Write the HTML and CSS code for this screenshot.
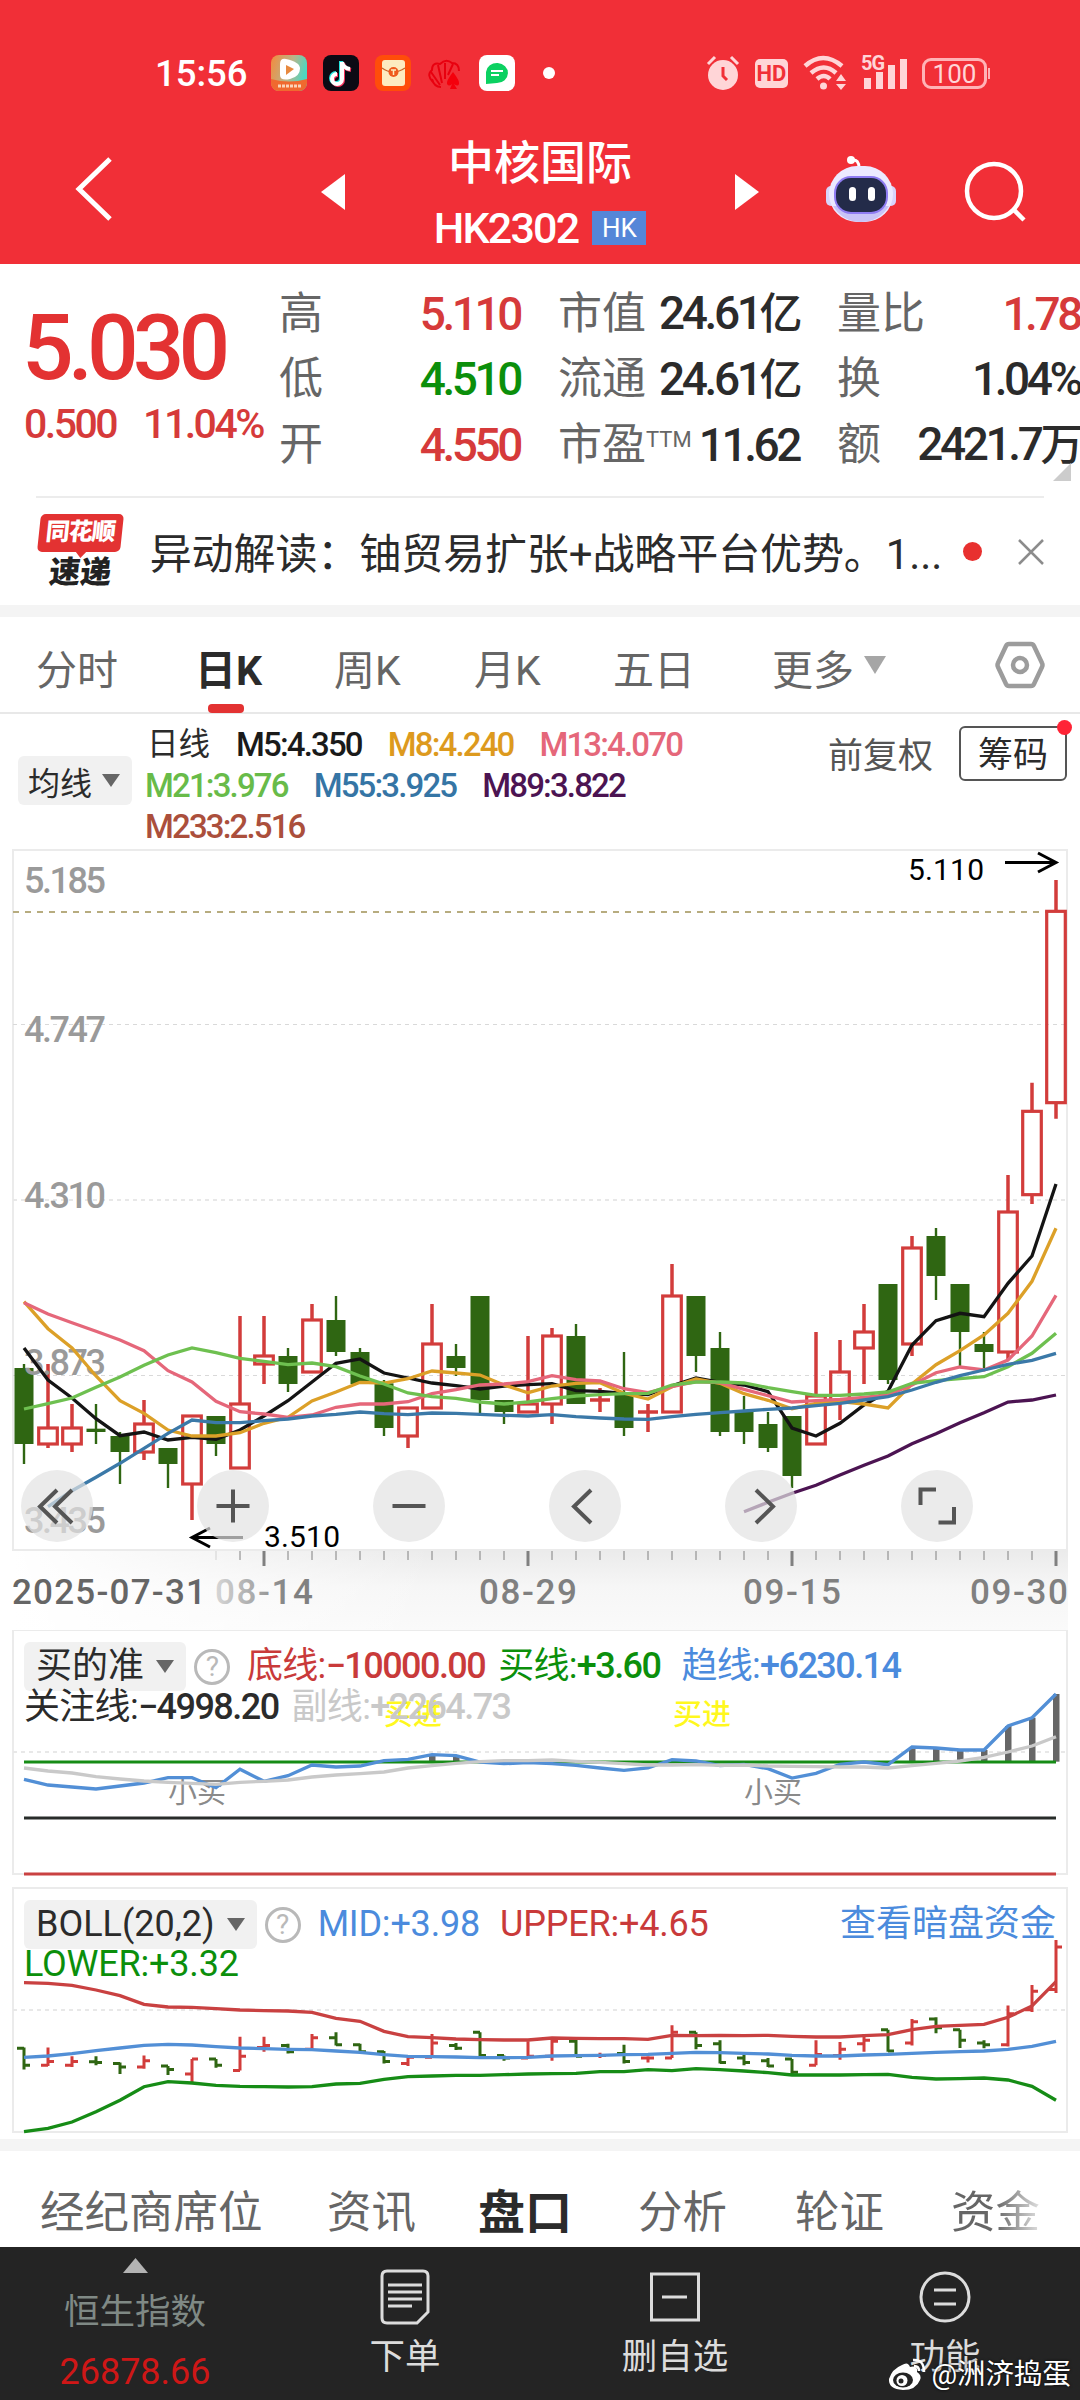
FILE: index.html
```html
<!DOCTYPE html>
<html lang="zh-CN">
<head>
    <meta charset="UTF-8">
    <meta name="viewport" content="width=device-width, initial-scale=1.0">
    <title>中核国际 HK2302</title>
    <link rel="stylesheet" href="styles.css">
</head>
<body>
    <header class="header">
        <div class="status-bar">
            <span class="clock">15:56</span>
            <div class="app-icons">
                <svg width="36" height="36" viewBox="0 0 36 36">
                    <defs>
                        <linearGradient id="video" x1="0" y1="0" x2="1" y2="0.3">
                            <stop offset="0" stop-color="#f58a3c"/>
                            <stop offset="0.6" stop-color="#b9b58a"/>
                            <stop offset="1" stop-color="#4fd6c0"/>
                        </linearGradient>
                    </defs>
                    <rect width="36" height="36" rx="8" fill="url(#video)"/>
                    <path d="M0 24q18 5 36 0v4a8 8 0 0 1-8 8H8a8 8 0 0 1-8-8z" fill="#f0692f"/>
                    <path d="M9 9q0-6 6-5 14 3 14 9.500 0 8-10 10.500-10 2-10-4z" fill="#fff"/>
                    <path d="M15 10l8 4-8 6z" fill="#e8893f"/>
                    <path d="M7 31h23" stroke="#fbd3b8" stroke-width="3" stroke-dasharray="3 1"/>
                </svg>
                <svg width="36" height="36" viewBox="0 0 36 36">
                    <rect width="36" height="36" rx="8" fill="#0b0a14"/>
                    <g fill="none" stroke-width="4">
                        <path d="M18 6v17a5 5 0 1 1-5-5M18 7q1 6 8 7" stroke="#25e5e0"/>
                        <path d="M20 8v17a5 5 0 1 1-5-5M20 8q1 6 8 7" stroke="#f5325c"/>
                        <path d="M19 7v17a5 5 0 1 1-5-5M19 7q1 6 8 7" stroke="#fff"/>
                    </g>
                </svg>
                <svg width="36" height="36" viewBox="0 0 36 36">
                    <rect width="36" height="36" rx="8" fill="#ff4d0a"/>
                    <rect x="7" y="5" width="23" height="26" rx="3" fill="#fdebc0"/>
                    <path d="M7 13q11 8 23 0" stroke="#c9662a" stroke-width="1.5" fill="none"/>
                    <circle cx="18.500" cy="17" r="5" fill="#ef5a1d"/>
                    <path d="M16 15h5M18.500 15v5" stroke="#fdebc0" stroke-width="1.500"/>
                </svg>
                <svg width="36" height="36" viewBox="0 0 36 36">
                    <g fill="none" stroke="#e8000f" stroke-width="2">
                        <path d="M6 27Q-1 20 5 15Q5 7 13 9Q19 3 25 8Q32 8 32 16"/>
                        <path d="M13 30L4 17M15 28L11 10M18 24L18 8M21 20L26 9M5 24q2 8 9 8"/>
                    </g>
                    <path d="M26 17q-7 9-6 12 2 3 5 0l-2 5h7l-3-5q4 3 5 0 1-3-6-12z" fill="#f4000c"/>
                </svg>
                <svg width="36" height="36" viewBox="0 0 36 36">
                    <rect width="36" height="36" rx="8" fill="#fff"/>
                    <path d="M7 29V17A11 10 0 1 1 18 28z" fill="#0bd161"/>
                    <path d="M12 16h12M12 20h8" stroke="#fff" stroke-width="2"/>
                </svg>
            </div>
            <span class="more-dot"></span>
            <div class="system-icons">
                <svg width="34" height="36" viewBox="0 0 34 36">
                    <circle cx="17" cy="20" r="15" fill="#ffd5d7"/>
                    <path d="M2 9l7-7M32 9l-7-7" stroke="#ffd5d7" stroke-width="3"/>
                    <path d="M17 12v9l4 4" stroke="#f12f37" stroke-width="3" fill="none"/>
                </svg>
                <span class="hd">HD</span>
                <svg width="46" height="36" viewBox="0 0 46 36" fill="none" stroke="#ffd5d7" stroke-width="4.500">
                    <path d="M2 11Q20-5 39 11M8 18q13-11 25 0M14 24q7-6 13 0"/>
                    <circle cx="20.500" cy="31" r="3.500" fill="#ffd5d7" stroke="none"/>
                    <path d="M38 19l5 7H33zM38 35l5-6H33z" fill="#ffd5d7" stroke="none"/>
                </svg>
                <div class="signal">
                    <span class="network">5G</span>
                    <svg width="48" height="34" viewBox="0 0 48 34" fill="#ffd5d7">
                        <path d="M3 22h7v11H3zM15 16h7v17h-7zM27 9h7v24h-7zM39 3h7v30h-7z"/>
                    </svg>
                </div>
                <span class="battery">100</span>
                <span class="battery-tip"></span>
            </div>
        </div>
        <div class="title-bar">
            <svg class="back" width="40" height="66" viewBox="0 0 40 66"><path d="M36 3L5 33l31 30" fill="none" stroke="#fff" stroke-width="5"/></svg>
            <svg class="prev" width="24" height="36" viewBox="0 0 24 36"><path d="M24 0v36L0 18z" fill="#fff"/></svg>
            <div class="stock">
                <h1>中核国际</h1>
                <div class="code">HK2302<span class="market">HK</span></div>
            </div>
            <svg class="next" width="24" height="36" viewBox="0 0 24 36"><path d="M0 0v36l24-18z" fill="#fff"/></svg>
            <svg class="robot" width="72" height="68" viewBox="0 0 72 68">
                <path d="M34 12q0-9-7-8" fill="none" stroke="#fff" stroke-width="3"/>
                <circle cx="26" cy="4" r="4" fill="#fff"/>
                <rect x="1" y="30" width="10" height="20" rx="5" fill="#d8d4fb"/>
                <rect x="61" y="30" width="10" height="20" rx="5" fill="#d8d4fb"/>
                <rect x="4" y="10" width="64" height="56" rx="28" fill="#ece9ff"/>
                <path d="M8 50q10 16 28 16t28-16z" fill="#c9c3f6"/>
                <rect x="9" y="20" width="54" height="38" rx="17" fill="#8f7cf2"/>
                <rect x="11" y="22" width="50" height="34" rx="15" fill="#232b49"/>
                <rect x="24" y="31" width="7" height="14" rx="3.500" fill="#fff"/>
                <rect x="43" y="31" width="7" height="14" rx="3.500" fill="#fff"/>
            </svg>
            <svg class="search" width="64" height="62" viewBox="0 0 64 62" fill="none" stroke="#fff" stroke-width="4.500">
                <circle cx="30" cy="30" r="27"/>
                <path d="M50 49l10 10"/>
            </svg>
        </div>
    </header>

    <section class="quote">
        <div class="price">
            <div class="last">5.030</div>
            <div class="change"><span>0.500</span><span>11.04%</span></div>
        </div>
        <dl class="stats">
            <div><dt>高</dt><dd class="up">5.110</dd></div>
            <div><dt>低</dt><dd class="down">4.510</dd></div>
            <div><dt>开</dt><dd class="up">4.550</dd></div>
        </dl>
        <dl class="stats">
            <div><dt>市值</dt><dd>24.61<i>亿</i></dd></div>
            <div><dt>流通</dt><dd>24.61<i>亿</i></dd></div>
            <div><dt>市盈<sup>TTM</sup></dt><dd>11.62</dd></div>
        </dl>
        <dl class="stats">
            <div><dt>量比</dt><dd class="up">1.78</dd></div>
            <div><dt>换</dt><dd>1.04%</dd></div>
            <div><dt>额</dt><dd>2421.7<i>万</i></dd></div>
        </dl>
        <span class="corner"></span>
    </section>

    <section class="news">
        <div class="brand"><span class="brand-top">同花顺</span><span class="brand-bottom">速递</span></div>
        <p>异动解读：铀贸易扩张+战略平台优势。1...</p>
        <span class="unread"></span>
        <svg width="26" height="26" viewBox="0 0 26 26"><path d="M1 1l24 24M25 1L1 25" stroke="#8c8c8c" stroke-width="2.500"/></svg>
    </section>

    <nav class="periods">
        <span>分时</span>
        <span class="active">日K</span>
        <span>周K</span>
        <span>月K</span>
        <span>五日</span>
        <span>更多<svg width="22" height="18" viewBox="0 0 22 18"><path d="M0 0h22L11 18z" fill="#a6a6a6"/></svg></span>
        <svg class="settings" width="50" height="48" viewBox="0 0 50 48" fill="none" stroke="#9c9c9c" stroke-width="4.500">
            <path d="M14 3h22q2 0 3 2l8 17q1 2 0 4l-8 17q-1 2-3 2H14q-2 0-3-2L3 26q-1-2 0-4l8-17q1-2 3-2z"/>
            <circle cx="25" cy="24" r="7"/>
        </svg>
    </nav>

    <section class="averages">
        <button class="picker">均线<svg width="18" height="13" viewBox="0 0 18 13"><path d="M0 0h18L9 13z" fill="#666"/></svg></button>
        <div class="ma-list">
            <div><span class="ma-name">日线</span><span class="m5">M5:4.350</span><span class="m8">M8:4.240</span><span class="m13">M13:4.070</span></div>
            <div><span class="m21">M21:3.976</span><span class="m55">M55:3.925</span><span class="m89">M89:3.822</span></div>
            <div><span class="m233">M233:2.516</span></div>
        </div>
        <div class="adjust">前复权</div>
        <div class="chips">筹码</div>
    </section>

    <svg class="kline" id="kline" width="1080" height="784" viewBox="0 846 1080 784">
        <defs>
            <linearGradient id="axisShade" x1="0" y1="0" x2="0" y2="1">
                <stop offset="0" stop-color="#ebebeb"/>
                <stop offset="0.450" stop-color="#f6f6f6"/>
                <stop offset="1" stop-color="#fafafa"/>
            </linearGradient>
            <linearGradient id="axisFade">
                <stop offset="0" stop-color="#fff"/>
                <stop offset="0.400" stop-color="#fff" stop-opacity="0"/>
            </linearGradient>
            <linearGradient id="dateFade" gradientUnits="userSpaceOnUse" x1="205" y1="0" x2="290" y2="0">
                <stop offset="0" stop-color="#808080" stop-opacity="0.200"/>
                <stop offset="1" stop-color="#808080"/>
            </linearGradient>
        </defs>
        <rect x="13" y="1551" width="1055" height="79" fill="url(#axisShade)"/>
        <rect x="13" y="1551" width="1055" height="79" fill="url(#axisFade)"/>
        <rect x="13" y="850" width="1054" height="700" fill="#fff" stroke="#ebebeb" stroke-width="2"/>
        <g class="grid-lines">
            <path d="M13 1024.500H1066M13 1375.500H1066" stroke="#d9d9d9" stroke-width="1" stroke-dasharray="4 4"/>
            <path d="M13 1200H1066" stroke="#e8e8e8" stroke-width="2" stroke-dasharray="4 4"/>
            <path d="M13 912H1046" stroke="#b7ac7f" stroke-width="2" stroke-dasharray="6 6"/>
        </g>
        <g id="candles"></g>
        <g class="price-labels">
            <text x="24" y="892.500" textLength="82">5.185</text>
            <text x="24" y="1042" textLength="82">4.747</text>
            <text x="24" y="1208" textLength="82">4.310</text>
            <text x="24" y="1375" textLength="82">3.873</text>
            <text x="24" y="1533" textLength="82">3.435</text>
        </g>
        <g id="averages"></g>
        <g class="marks">
            <text x="908" y="880" textLength="76">5.110</text>
            <text x="264" y="1547" textLength="76">3.510</text>
            <path d="M1005 862.500h50M1038 853l18 9.500-18 9.500M243 1537.500h-50M210 1528l-18 9.500 18 9.500"/>
        </g>
        <g class="controls">
            <circle cx="57" cy="1506" r="36"/>
            <circle cx="233" cy="1506" r="36"/>
            <circle cx="409" cy="1506" r="36"/>
            <circle cx="585" cy="1506" r="36"/>
            <circle cx="761" cy="1506" r="36"/>
            <circle cx="937" cy="1506" r="36"/>
            <path d="M57 1490l-17 16.500 17 16.500M72 1490l-17 16.500 17 16.500"/>
            <path d="M216.500 1506h33M233 1489.500v33"/>
            <path d="M392.500 1506h33"/>
            <path d="M591 1490l-17 16.500 17 16.500"/>
            <path d="M756 1490l17 16.500-17 16.500"/>
            <path d="M920.500 1505v-15.500H936M938.500 1522.500H954V1507"/>
        </g>
        <g id="ticks"></g>
        <g class="dates">
            <text x="12" y="1604" textLength="194" fill="#666">2025-07-31</text>
            <text x="215" y="1604" textLength="98" fill="url(#dateFade)">08-14</text>
            <text x="479" y="1604" textLength="98">08-29</text>
            <text x="743" y="1604" textLength="98">09-15</text>
            <text x="970" y="1604" textLength="98">09-30</text>
        </g>
    </svg>

    <section class="panel panel-buy">
        <svg class="panel-chart" width="1080" height="252" viewBox="0 1630 1080 252">
            <rect x="13" y="1630" width="1054" height="244" fill="#fff" stroke="#ebebeb" stroke-width="2"/>
            <path d="M13 1752H1066" stroke="#e8e8e8" stroke-width="2" stroke-dasharray="4 4"/>
            <text class="signal-small" x="168" y="1803">小买</text>
            <text class="signal-small" x="744" y="1803">小买</text>
            <g id="trend"></g>
            <path d="M24 1818H1056" stroke="#282c2a" stroke-width="3"/>
            <path d="M24 1874H1056" stroke="#c94141" stroke-width="3"/>
            <text class="signal-buy" x="384" y="1725">买进</text>
            <text class="signal-buy" x="673" y="1725">买进</text>
        </svg>
        <div class="panel-legend">
            <button class="picker">买的准<svg width="18" height="13" viewBox="0 0 18 13"><path d="M0 0h18L9 13z" fill="#666"/></svg></button>
            <span class="help">?</span>
            <span class="v-red">底线:<b>−10000.00</b></span>
            <span class="v-green">买线:<b>+3.60</b></span>
            <span class="v-blue trend-value">趋线:<b>+6230.14</b></span>
        </div>
        <div class="panel-legend second">
            <span>关注线:<b>−4998.20</b></span>
            <span class="v-gray">副线:<b>+2264.73</b></span>
        </div>
    </section>

    <section class="panel panel-boll">
        <svg class="panel-chart" width="1080" height="257" viewBox="0 1882 1080 257">
            <rect x="13" y="1888" width="1054" height="244" fill="#fff" stroke="#ebebeb" stroke-width="2"/>
            <path d="M13 2010H1066" stroke="#e8e8e8" stroke-width="2" stroke-dasharray="4 4"/>
            <g id="boll"></g>
        </svg>
        <div class="panel-legend">
            <button class="picker">BOLL(20,2)<svg width="18" height="13" viewBox="0 0 18 13"><path d="M0 0h18L9 13z" fill="#666"/></svg></button>
            <span class="help">?</span>
            <span class="v-blue">MID:+3.98</span>
            <span class="v-red">UPPER:+4.65</span>
            <a class="dark-pool">查看暗盘资金</a>
        </div>
        <div class="panel-legend second">
            <span class="v-green">LOWER:+3.32</span>
        </div>
    </section>

    <nav class="info-tabs">
        <span>经纪商席位</span>
        <span>资讯</span>
        <span class="active">盘口</span>
        <span>分析</span>
        <span>轮证</span>
        <span class="fading">资金</span>
    </nav>

    <footer class="toolbar">
        <div class="index">
            <svg width="25" height="15" viewBox="0 0 25 15"><path d="M12.500 0L25 15H0z" fill="#b3b3b3"/></svg>
            <span class="index-name">恒生指数</span>
            <span class="index-value">26878.66</span>
        </div>
        <div class="tool">
            <svg width="50" height="56" viewBox="0 0 50 56" fill="none" stroke="#dcdcdc" stroke-width="3">
                <path d="M7 2h36q5 0 5 5v36L37 54H7q-5 0-5-5V7q0-5 5-5z"/>
                <path d="M8 16h34M8 23h34M8 30h34M8 37h24"/>
            </svg>
            <span>下单</span>
        </div>
        <div class="tool">
            <svg width="50" height="56" viewBox="0 0 50 56" fill="none" stroke="#dcdcdc" stroke-width="3">
                <path d="M1.500 5h47v46h-47zM12 28h25"/>
            </svg>
            <span>删自选</span>
        </div>
        <div class="tool">
            <svg width="52" height="56" viewBox="0 0 52 56" fill="none" stroke="#dcdcdc" stroke-width="3">
                <circle cx="26" cy="28" r="24"/>
                <path d="M15 21h22M15 35h22"/>
            </svg>
            <span>功能</span>
        </div>
        <div class="watermark">
            <svg width="40" height="34" viewBox="0 0 40 34">
                <path d="M15 7Q21 3 23 9Q31 7 30 14Q35 17 33 22Q29 32 16 32Q1 31 2 21Q5 11 15 7z" fill="#fff"/>
                <ellipse cx="16" cy="22" rx="10" ry="7.500" fill="#242424"/>
                <circle cx="15" cy="22.500" r="5.500" fill="#fff"/>
                <circle cx="14" cy="23" r="2.500" fill="#242424"/>
                <path d="M26 2q11-1 11 12M27 8q5 0 5 5" fill="none" stroke="#fff" stroke-width="2.500"/>
            </svg>
            @洲济捣蛋
        </div>
    </footer>

    <script src="chart.js"></script>
</body>
</html>
```
FILE: styles.css
```css
* {
    box-sizing: border-box;
}
body {
    margin: 0;
    width: 1080px;
    height: 2400px;
    overflow: hidden;
    background: #fff;
    color: #2b2b2b;
    font-family: Roboto, "Noto Sans CJK SC", sans-serif;
}
svg {
    display: block;
    flex: none;
}
h1, p, dl, dd {
    margin: 0;
}
i {
    font-style: normal;
}

/* header */
.header {
    height: 264px;
    background: #f12f37;
    color: #fff;
}
.status-bar {
    display: flex;
    align-items: center;
    height: 146px;
    padding-left: 155px;
}
.clock {
    width: 116px;
    font-size: 36.5px;
    font-weight: 500;
}
.app-icons {
    display: flex;
    gap: 16px;
}
.more-dot {
    width: 12px;
    height: 12px;
    margin-left: 28px;
    border-radius: 50%;
    background: #fff;
}
.system-icons {
    display: flex;
    align-items: center;
    margin-left: 151px;
    color: #ffd5d7;
}
.hd {
    width: 33px;
    height: 29px;
    margin: 0 15px 0 15px;
    border-radius: 5px;
    background: #ffd5d7;
    color: #f12f37;
    font-size: 22px;
    font-weight: 700;
    line-height: 29px;
    text-align: center;
}
.signal {
    display: grid;
    width: 48px;
    margin: 0 13px 0 12px;
}
.signal > * {
    grid-area: 1 / 1;
}
.network {
    font-size: 20px;
    font-weight: 700;
    line-height: 14px;
    letter-spacing: -1px;
}
.battery {
    width: 65px;
    height: 31px;
    border: 3px solid #ffb3b6;
    border-radius: 9px;
    font-size: 26px;
    line-height: 26px;
    text-align: center;
}
.battery-tip {
    width: 2px;
    height: 11px;
    margin-left: 1px;
    background: #ffb3b6;
}
.title-bar {
    display: flex;
    height: 118px;
}
.back {
    margin: 10px 0 0 74px;
}
.prev {
    margin: 28px 0 0 207px;
}
.stock {
    width: 390px;
    margin-top: -11px;
    text-align: center;
}
.stock h1 {
    font-size: 46px;
    font-weight: 500;
    line-height: 56px;
}
.code {
    display: flex;
    align-items: center;
    justify-content: center;
    height: 74px;
    font-size: 43px;
    font-weight: 500;
    letter-spacing: -1.8px;
}
.market {
    width: 54px;
    height: 34px;
    margin-left: 14px;
    background: #5586d8;
    font-size: 26px;
    font-weight: 400;
    line-height: 34px;
    letter-spacing: 0;
}
.next {
    margin-top: 28px;
}
.robot {
    margin: 10px 0 0 66px;
}
.search {
    margin: 15px 0 0 67px;
}

/* quote */
.quote {
    display: flex;
    position: relative;
    height: 232px;
    padding-top: 17px;
}
.price {
    width: 279px;
    padding-left: 24px;
    color: #e33232;
}
.last {
    margin-top: 11px;
    margin-left: -2px;
    font-size: 91px;
    font-weight: 500;
    line-height: 112px;
    letter-spacing: -6px;
}
.change {
    display: flex;
    gap: 27px;
    margin-top: 1px;
    color: #d63a3a;
    font-size: 41px;
    font-weight: 500;
    line-height: 38px;
    letter-spacing: -2.5px;
}
.stats {
    width: 241px;
    margin-right: 38px;
}
.stats:last-of-type {
    width: 243px;
    margin-right: 0;
}
.stats > div {
    display: flex;
    align-items: center;
    justify-content: space-between;
    height: 65.5px;
}
dt {
    color: #666;
    font-size: 44px;
    line-height: 60px;
}
dt sup {
    display: inline-block;
    font-size: 22px;
    line-height: 30px;
    vertical-align: 13px;
}
dd {
    font-size: 46px;
    font-weight: 500;
    letter-spacing: -3.4px;
    line-height: 60px;
    white-space: nowrap;
}
dd i {
    font-size: 43px;
}
.up {
    color: #d63a3a;
}
.down {
    color: #0b8f0b;
}
.corner {
    position: absolute;
    right: 9px;
    bottom: 15px;
    border-bottom: 18px solid #ccc;
    border-left: 18px solid transparent;
}

/* news strip */
.news {
    display: flex;
    align-items: center;
    height: 109px;
    margin: 0 36px;
    border-top: 2px solid #ececec;
}
.brand {
    width: 83px;
    height: 76px;
    margin: 0 28px 0 3px;
    text-align: center;
}
.brand span {
    display: block;
    font-weight: 900;
    transform: skewX(-6deg);
    white-space: nowrap;
}
.brand-top {
    position: relative;
    height: 38px;
    border-radius: 5px;
    background: #e33232;
    color: #fff;
    font-size: 24px;
    line-height: 37px;
    letter-spacing: -1px;
}
.brand-top::after {
    content: "";
    position: absolute;
    left: 38px;
    bottom: -6px;
    border-top: 7px solid #e33232;
    border-left: 6px solid transparent;
    border-right: 6px solid transparent;
}
.brand-bottom {
    color: #222;
    font-size: 31px;
    line-height: 42px;
}
.news p {
    width: 800px;
    margin-top: -3px;
    font-size: 42px;
    letter-spacing: -0.1px;
    white-space: nowrap;
}
.unread {
    width: 19px;
    height: 19px;
    margin: 0 36px 0 16px;
    border-radius: 50%;
    background: #e8302f;
}

/* period tabs */
.periods {
    display: flex;
    align-items: center;
    height: 109px;
    padding-left: 36px;
    border-top: 12px solid #f4f4f4;
    border-bottom: 2px solid #e8e8e8;
    color: #666;
    font-size: 41px;
}
.periods span {
    display: flex;
    align-items: center;
    height: 95px;
    padding-top: 5px;
}
.periods span:nth-child(1) { width: 159px; }
.periods span:nth-child(2) { width: 139px; }
.periods span:nth-child(3) { width: 140px; }
.periods span:nth-child(4) { width: 139px; }
.periods span:nth-child(5) { width: 159px; }
.periods span:nth-child(6) { width: 223px; gap: 10px; }
.periods svg {
    margin-top: -4px;
}
.periods .settings {
    margin-top: 0;
}
.periods .active {
    position: relative;
    color: #2b2b2b;
    font-weight: 700;
}
.periods .active::after {
    content: "";
    position: absolute;
    left: 13px;
    bottom: -1px;
    width: 36px;
    height: 9px;
    border-radius: 4px;
    background: #e33232;
}

/* moving averages */
.picker {
    display: flex;
    align-items: center;
    gap: 12px;
    height: 49px;
    padding: 0 12px;
    border: none;
    border-radius: 6px;
    background: #f1f1f1;
    color: #2b2b2b;
    font: inherit;
}
.averages {
    display: flex;
    height: 132px;
    padding-left: 18px;
}
.averages .picker {
    gap: 10px;
    width: 114px;
    margin-top: 42px;
    padding: 0 10px;
    font-size: 32px;
}
.ma-list {
    width: 679px;
    padding: 8px 0 0 13px;
    font-size: 33px;
    font-weight: 500;
    letter-spacing: -1.85px;
}
.ma-list div {
    display: flex;
    gap: 26px;
    height: 41px;
    line-height: 45px;
}
.ma-name {
    margin-left: 2px;
    font-size: 31.5px;
    font-weight: 400;
    letter-spacing: 0;
}
.m5 { color: #1a1a1a; }
.m8 { color: #dd9a1e; }
.m13 { color: #e5677a; }
.m21 { color: #68bb49; }
.m55 { color: #3575a5; }
.m89 { color: #4c1452; }
.m233 { color: #ab4f3c; }
.adjust {
    width: 148px;
    padding-left: 17px;
    color: #555;
    font-size: 35px;
    line-height: 86px;
}
.chips {
    position: relative;
    width: 108px;
    height: 55px;
    margin-top: 12px;
    border: 2px solid #555;
    border-radius: 6px;
    font-size: 35px;
    line-height: 56px;
    text-align: center;
}
.chips::after {
    content: "";
    position: absolute;
    top: -8px;
    right: -7px;
    width: 15px;
    height: 15px;
    border-radius: 50%;
    background: #ff2436;
}

/* k-line chart */
.price-labels text {
    fill: #9a9a9a;
    font-size: 36px;
    font-weight: 500;
}
.marks text {
    font-size: 30px;
}
.marks path {
    fill: none;
    stroke: #000;
    stroke-width: 3;
}
.controls circle {
    fill: #e2e2e2;
    fill-opacity: 0.7;
}
.controls path {
    fill: none;
    stroke: #555;
    stroke-width: 4;
}
.dates text {
    font-size: 35px;
    font-weight: 500;
}
.dates {
    fill: #808080;
}

/* indicator panels */
.panel {
    display: grid;
    grid-template-rows: 60px 38px 1fr;
}
.panel-chart {
    grid-area: 1 / 1 / 4 / 2;
}
.panel-buy {
    height: 252px;
}
.panel-boll {
    height: 257px;
    grid-template-rows: 65px 32px 1fr;
}
.panel-legend {
    display: flex;
    grid-area: 1 / 1;
    align-items: center;
    height: 49px;
    margin: 12px 24px 0;
    font-size: 36px;
    letter-spacing: -0.7px;
    line-height: 49px;
    white-space: nowrap;
}
.panel-boll .panel-legend {
    margin-top: 18px;
    letter-spacing: -0.2px;
}
.panel-legend b {
    font-weight: 500;
    letter-spacing: -1.55px;
}
.panel .second {
    grid-area: 2 / 1;
    height: 32px;
    margin-top: 1px;
    line-height: 32px;
}
.panel-legend span + span {
    margin-left: 13px;
}
.panel-legend .help {
    width: 36px;
    height: 36px;
    margin: 0 17px 0 8px;
    border: 3px solid #b9b9b9;
    border-radius: 50%;
    color: #b9b9b9;
    font-size: 28px;
    line-height: 30px;
    text-align: center;
}
.panel-legend .help + span {
    margin-left: 0;
}
.panel-legend .trend-value {
    margin-left: 21px;
}
.panel-boll span.v-red {
    margin-left: 20px;
}
.v-red { color: #c93a3a; }
.v-green { color: #0b8f0b; }
.v-blue { color: #4b8bdd; }
.v-gray { color: #c9c9c9; }
.dark-pool {
    margin-left: auto;
    color: #4b8bdd;
    letter-spacing: 0;
}
.signal-buy {
    fill: #fff81e;
    font-size: 29px;
    font-weight: 500;
}
.signal-small {
    fill: #8a8a8a;
    font-size: 29px;
}

/* info tabs */
.info-tabs {
    display: flex;
    align-items: center;
    height: 108px;
    padding: 28px 0 0 40px;
    border-top: 12px solid #f4f4f4;
    color: #666;
    font-size: 44.5px;
    line-height: 60px;
    white-space: nowrap;
}
.info-tabs span:nth-child(1) { width: 287px; }
.info-tabs span:nth-child(2) { width: 151px; }
.info-tabs span:nth-child(3) { width: 160px; }
.info-tabs span:nth-child(4) { width: 157px; }
.info-tabs span:nth-child(5) { width: 156px; }
.info-tabs .active {
    color: #2b2b2b;
    font-size: 47px;
    font-weight: 700;
}
.fading {
    background: linear-gradient(90deg, #666 50%, #e0e0e0);
    background-clip: text;
    -webkit-background-clip: text;
    color: transparent;
}

/* bottom toolbar */
.toolbar {
    display: grid;
    position: relative;
    grid-template-columns: repeat(4, 1fr);
    height: 153px;
    background: #242424;
    color: #dcdcdc;
}
.index, .tool {
    display: flex;
    flex-direction: column;
    align-items: center;
    font-size: 35.5px;
    line-height: 44px;
}
.index {
    padding-top: 11px;
}
.index-name {
    margin-top: 17px;
    color: #7f8985;
}
.index-value {
    margin-top: 16px;
    color: #cf1717;
    font-size: 36px;
}
.tool {
    padding-top: 22px;
}
.tool span {
    margin-top: 10px;
}
.watermark {
    display: flex;
    position: absolute;
    right: 9px;
    bottom: 5px;
    align-items: center;
    gap: 4px;
    color: #fff;
    font-size: 28.5px;
    line-height: 40px;
    text-shadow: 0 0 3px #000;
}
```
FILE: chart.js
```js
const NS = "http://www.w3.org/2000/svg";
const UP = "#d23c3b";
const DOWN = "#2f6612";

// [direction, high, body top, body bottom, low], three units per pixel
const candles = [
    ["d", 432, 444, 672, 732], ["u", 432, 624, 672, 684], ["u", 552, 624, 672, 696], ["d", 552, 626, 636, 672],
    ["d", 636, 648, 696, 792], ["u", 540, 612, 696, 720], ["d", 684, 684, 732, 804], ["u", 588, 588, 792, 900],
    ["d", 588, 588, 672, 708], ["u", 288, 552, 744, 744], ["u", 288, 408, 432, 492], ["d", 384, 408, 492, 516],
    ["u", 252, 300, 456, 456], ["d", 228, 300, 396, 408], ["d", 384, 396, 492, 492], ["d", 480, 490, 624, 648],
    ["u", 564, 564, 648, 684], ["u", 252, 372, 564, 564], ["d", 372, 408, 444, 468], ["d", 228, 228, 540, 588],
    ["d", 540, 540, 576, 612], ["u", 348, 552, 576, 576], ["u", 324, 348, 552, 612], ["d", 312, 348, 552, 552],
    ["u", 504, 540, 540, 576], ["d", 396, 516, 624, 648], ["u", 552, 576, 576, 636], ["u", 132, 228, 576, 576],
    ["d", 228, 228, 408, 456], ["d", 336, 384, 636, 648], ["d", 528, 576, 636, 672], ["d", 576, 612, 684, 696],
    ["d", 588, 588, 768, 804], ["u", 336, 528, 672, 672], ["u", 360, 456, 542, 600], ["u", 252, 336, 384, 492],
    ["d", 192, 192, 480, 492], ["u", 48, 84, 372, 408], ["d", 24, 48, 168, 240], ["d", 192, 192, 336, 440],
    ["d", 336, 372, 396, 444], ["u", -135, -24, 396, 420], ["u", -412, -326, -76, -48], ["u", -1020, -926, -352, -304]
];

const averages = [
    { color: "#141414", start: 0, points: [384, 480, 534, 596, 647, 636, 660, 652, 658, 630, 588, 542, 486, 430, 417, 459, 474, 489, 497, 507, 498, 494, 491, 512, 514, 520, 524, 497, 474, 487, 495, 515, 624, 648, 610, 555, 514, 375, 302, 280, 290, 190, 108, -108] },
    { color: "#dca028", start: 0, points: [245, 326, 384, 468, 542, 580, 630, 648, 648, 638, 610, 592, 543, 516, 487, 489, 476, 453, 459, 465, 495, 518, 498, 490, 488, 520, 537, 500, 477, 490, 521, 541, 566, 550, 545, 552, 564, 492, 434, 392, 345, 280, 184, 25] },
    { color: "#e5677a", start: 0, points: [248, 282, 308, 334, 360, 392, 452, 486, 544, 575, 582, 592, 585, 562, 552, 552, 545, 521, 509, 495, 492, 485, 467, 479, 483, 506, 518, 500, 485, 488, 508, 527, 546, 542, 538, 532, 525, 495, 458, 441, 450, 420, 348, 226] },
    { color: "#6ec050", start: 0, points: [567, 551, 534, 502, 471, 436, 405, 384, 398, 415, 424, 434, 429, 440, 468, 492, 519, 530, 535, 546, 552, 546, 536, 528, 524, 521, 520, 495, 486, 486, 489, 503, 515, 526, 526, 522, 516, 490, 482, 476, 470, 440, 400, 340] },
    { color: "#3b79a8", start: 1, points: [860, 812, 772, 730, 685, 640, 600, 608, 608, 602, 597, 588, 583, 576, 581, 584, 579, 580, 583, 586, 588, 584, 590, 594, 597, 598, 590, 583, 578, 573, 568, 564, 557, 550, 540, 530, 510, 487, 467, 450, 433, 421, 400] },
    { color: "#4c1452", start: 30, points: [875, 847, 820, 796, 765, 736, 708, 671, 641, 608, 578, 546, 540, 525] }
];

const trend = [478, 495, 501, 507, 498, 489, 473, 473, 503, 448, 484, 467, 435, 441, 438, 422, 418, 404, 407, 426, 431, 428, 431, 436, 444, 451, 444, 419, 423, 437, 433, 446, 474, 460, 433, 426, 434, 381, 384, 390, 390, 318, 293, 222];
const trendAvg = [444, 453, 459, 470, 477, 483, 487, 490, 493, 487, 484, 480, 471, 465, 461, 456, 444, 437, 430, 425, 422, 422, 420, 424, 427, 431, 435, 435, 434, 436, 435, 438, 439, 440, 441, 441, 444, 437, 430, 423, 412, 396, 378, 350];

const bollUpper = [308, 310, 316, 330, 347, 373, 381, 382, 386, 390, 392, 393, 397, 415, 424, 454, 470, 473, 477, 479, 480, 480, 474, 475, 476, 476, 478, 466, 467, 466, 467, 466, 469, 471, 471, 467, 464, 449, 439, 436, 433, 412, 378, 305];
const bollMid = [532, 528, 521, 512, 504, 496, 493, 495, 500, 504, 506, 508, 509, 513, 517, 524, 529, 530, 531, 533, 533, 532, 528, 527, 526, 524, 523, 520, 517, 518, 520, 522, 526, 528, 528, 525, 523, 520, 517, 515, 513, 508, 499, 484];
const bollLower = [755, 745, 726, 695, 661, 620, 605, 609, 616, 619, 620, 621, 620, 612, 610, 598, 590, 588, 586, 586, 584, 582, 581, 580, 575, 575, 569, 572, 566, 569, 573, 578, 585, 585, 585, 584, 583, 592, 597, 596, 594, 600, 619, 661];

const xAt = i => 24 + i * 24;

function add(parent, tag, attrs) {
    const el = document.createElementNS(NS, tag);
    for (const key in attrs) el.setAttribute(key, attrs[key]);
    document.getElementById(parent).appendChild(el);
}

function line(parent, points, base, color, start = 0) {
    const coords = points.map((v, i) => `${xAt(i + start)},${(base + v / 3).toFixed(1)}`);
    add(parent, "polyline", { points: coords.join(" "), fill: "none", stroke: color, "stroke-width": 3.3 });
}

function drawCandles() {
    candles.forEach(([dir, ...values], i) => {
        const x = xAt(i);
        const [high, top, bottom, low] = values.map(v => 1220 + v / 3);
        if (dir === "d") {
            add("candles", "path", { d: `M${x} ${high}V${low}`, stroke: DOWN, "stroke-width": 2.4 });
            add("candles", "rect", { x: x - 9.5, y: top, width: 19, height: bottom - top, fill: DOWN });
        } else if (top === bottom) {
            add("candles", "path", { d: `M${x} ${high}V${low}M${x - 10} ${top}h20`, stroke: UP, "stroke-width": 3.5 });
        } else {
            add("candles", "path", { d: `M${x} ${high}V${top}M${x} ${bottom}V${low}`, stroke: UP, "stroke-width": 3.5 });
            add("candles", "rect", { x: x - 9.3, y: top, width: 18.6, height: bottom - top, fill: "none", stroke: UP, "stroke-width": 3.2 });
        }
    });
}

function drawTicks() {
    for (let i = 8; i < 44; i++) {
        const major = i % 11 === 10;
        add("ticks", "path", {
            d: `M${xAt(i)} 1551v${major ? 15 : 9}`,
            stroke: "#808080",
            "stroke-opacity": i === 8 ? 0.3 : 1,
            "stroke-width": major ? 3 : 1
        });
    }
}

function drawTrend() {
    trend.forEach((v, i) => {
        if (v < 410) {
            add("trend", "rect", { x: xAt(i) - 3, y: 1620 + v / 3, width: 6.5, height: (425 - v) / 3, fill: "#666" });
        }
    });
    add("trend", "path", { d: "M24 1762H1056", stroke: "#168c16", "stroke-width": 3 });
    line("trend", trend, 1620, "#528fd6");
    line("trend", trendAvg, 1620, "#c9c9c9");
}

function drawBoll() {
    const scale = v => 1880 + (180 + (v + 1020) * 0.2219) / 3;
    candles.forEach(([dir, ...values], i) => {
        const x = xAt(i);
        const [high, top, bottom, low] = values.map(scale);
        const open = dir === "u" ? bottom : top;
        const close = dir === "u" ? top : bottom;
        add("boll", "path", {
            d: `M${x} ${high}V${low}M${x - 7} ${open}h7M${x} ${close}h6`,
            stroke: dir === "u" ? UP : DOWN,
            fill: "none",
            "stroke-width": 3
        });
    });
    line("boll", bollUpper, 1880, "#c94141");
    line("boll", bollMid, 1880, "#528fd6");
    line("boll", bollLower, 1880, "#168c16");
}

drawCandles();
averages.forEach(a => line("averages", a.points, 1220, a.color, a.start));
drawTicks();
drawTrend();
drawBoll();
```
